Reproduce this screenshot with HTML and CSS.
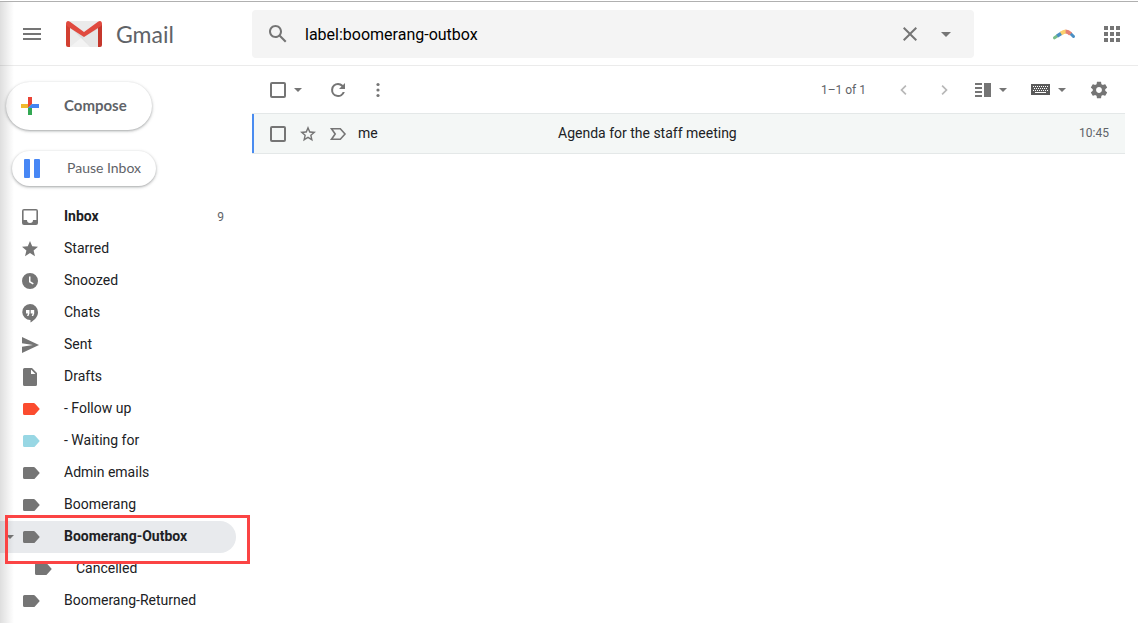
FILE: index.html
```html
<!DOCTYPE html>
<html lang="en">
<head>
    <meta charset="UTF-8">
    <meta name="viewport" content="width=device-width, initial-scale=1.0">
    <title>Gmail</title>
    <link rel="stylesheet" href="styles.css">
</head>
<body>
    <header class="header">
        <div class="brand">
            <button type="button" class="icon-btn" aria-label="Main menu">
                <svg width="24" height="24" viewBox="0 0 24 24"><path d="M3 18h18v-2H3v2zm0-5h18v-2H3v2zm0-7v2h18V6H3z"/></svg>
            </button>
            <a href="#" class="logo">
                <svg width="36" height="26" viewBox="0 0 36 26">
                    <path fill="#ebebeb" d="M2 0h32v26H2z"/>
                    <path fill="#dcdcdc" d="M4 6l14 10L32 6v20H24L15 17z"/>
                    <path fill="#e6e6e6" d="M18 16L32 8v18h-8l-7-8z"/>
                    <path fill="#f3f3f3" d="M4 26l11-9 9 9z"/>
                    <path fill="#d23f31" d="M0 3l4 3v20H2a2 2 0 0 1-2-2z"/>
                    <path fill="#c5372c" d="M36 3l-4 3v20h2a2 2 0 0 0 2-2z"/>
                    <path fill="#e04a3f" d="M0 3C0 0 2-.6 4 .8L18 11 32 .8c2-1.4 4-.8 4 2.200 0 1-.5 1.600-1.200 2.200L18 16 1.200 5.200C.5 4.600 0 4 0 3z"/>
                </svg>
                <span class="logo-text">Gmail</span>
            </a>
        </div>
        <form class="search" role="search">
            <button type="button" class="icon-btn" aria-label="Search mail">
                <svg width="24" height="24" viewBox="0 0 24 24"><path d="M20.490 19l-5.730-5.730C15.530 12.200 16 10.910 16 9.500 16 5.910 13.090 3 9.500 3S3 5.910 3 9.500 5.910 16 9.500 16c1.410 0 2.700-.470 3.770-1.240L19 20.490 20.490 19zM5 9.500C5 7.010 7.010 5 9.500 5S14 7.010 14 9.500 11.990 14 9.500 14 5 11.990 5 9.500z"/></svg>
            </button>
            <input type="text" class="search-input" aria-label="Search mail" value="label:boomerang-outbox">
            <button type="button" class="icon-btn" aria-label="Clear search">
                <svg width="24" height="24" viewBox="0 0 24 24"><path d="M19 6.400L17.600 5 12 10.600 6.400 5 5 6.400l5.600 5.600L5 17.600 6.400 19l5.600-5.600 5.600 5.600 1.400-1.400-5.600-5.600z"/></svg>
            </button>
            <button type="button" class="icon-btn options" aria-label="Search options">
                <svg width="24" height="24" viewBox="0 0 24 24"><path d="M7 10l5 5 5-5z"/></svg>
            </button>
        </form>
        <div class="apps">
            <button type="button" class="icon-btn" aria-label="Boomerang">
                <svg class="line" width="24" height="24" viewBox="0 0 24 24" stroke-width="3">
                    <path stroke="#79bd8b" stroke-linecap="round" d="M2.500 15.800l3-2"/>
                    <path stroke="#4a8fc4" stroke-linecap="round" d="M18.500 11.500l3 3"/>
                    <path stroke="#4a8fc4" stroke-width="3.600" d="M5.200 14L9.500 11.200"/>
                    <path stroke="#fbd06d" stroke-width="4" d="M9 11.500q2.500-1.600 5-2"/>
                    <path stroke="#e58073" stroke-width="4" d="M13.600 9.600q2.600 0 5 2.400"/>
                </svg>
            </button>
            <button type="button" class="icon-btn" aria-label="Google apps">
                <svg width="24" height="24" viewBox="0 0 24 24"><path d="M4 4h4v4H4zm6 0h4v4h-4zm6 0h4v4h-4zM4 10h4v4H4zm6 0h4v4h-4zm6 0h4v4h-4zM4 16h4v4H4zm6 0h4v4h-4zm6 0h4v4h-4z"/></svg>
            </button>
        </div>
    </header>

    <div class="layout">
        <aside class="sidebar">
            <button type="button" class="compose">
                <svg width="18" height="18" viewBox="0 0 18 18">
                    <path fill="#ea4335" d="M7 0h4v7L7 11z"/>
                    <path fill="#f0b92d" d="M0 7h7v4H0z"/>
                    <path fill="#34a853" d="M7 11l4-4v11H7z"/>
                    <path fill="#4285f4" d="M18 7v4H7l4-4z"/>
                </svg>
                <span>Compose</span>
            </button>
            <button type="button" class="pause">
                <svg class="pause-icon" width="16" height="19" viewBox="0 0 16 19"><rect width="6" height="19" rx="1"/><rect x="10" width="6" height="19" rx="1"/></svg>
                <span>Pause Inbox</span>
            </button>

            <nav class="folders">
                <a href="#" class="folder unread">
                    <svg width="20" height="20" viewBox="0 0 20 20"><path fill-rule="evenodd" d="M4 2h12a2 2 0 0 1 2 2v12a2 2 0 0 1-2 2H4a2 2 0 0 1-2-2V4a2 2 0 0 1 2-2zm-.4 1.600v9.400h3.400a3 3 0 0 0 6 0h3.400V3.600z"/></svg>
                    <span class="name">Inbox</span>
                    <span class="count">9</span>
                </a>
                <a href="#" class="folder">
                    <svg width="20" height="20" viewBox="0 0 20 20"><path d="M10 14.100L15 17.300 13.600 11.500 18 7.700l-5.800-.5L10 1.900 7.800 7.200 2 7.700l4.400 3.800L5 17.300z"/></svg>
                    <span class="name">Starred</span>
                </a>
                <a href="#" class="folder">
                    <svg width="20" height="20" viewBox="0 0 20 20"><path fill-rule="evenodd" d="M10 2a8 8 0 1 0 0 16 8 8 0 0 0 0-16zM9 5.500h1.500v4.700l3.200 2-.8 1.400L9 11.200z"/></svg>
                    <span class="name">Snoozed</span>
                </a>
                <a href="#" class="folder">
                    <svg width="20" height="20" viewBox="0 0 20 20"><path fill-rule="evenodd" d="M10 1a8 8 0 0 1 8 8.200c0 4-3 7.600-7.500 10.300V17A8 8 0 0 1 10 1zM6 7v3.500h2L7 13h1.500L9.500 10.500V7zm4.700 0v3.500h2l-1 2.500h1.500l1-2.500V7z"/></svg>
                    <span class="name">Chats</span>
                </a>
                <a href="#" class="folder">
                    <svg width="20" height="20" viewBox="0 0 20 20"><path d="M2 18l17-8L2 2v6.200l11 1.800-11 1.800z"/></svg>
                    <span class="name">Sent</span>
                </a>
                <a href="#" class="folder">
                    <svg width="20" height="20" viewBox="0 0 20 20"><path fill-rule="evenodd" d="M4.500 1H12l5 5v11.500a1.500 1.500 0 0 1-1.500 1.500h-11A1.500 1.500 0 0 1 3 17.500v-15A1.500 1.500 0 0 1 4.500 1zM11 2.500V7h4.500z"/></svg>
                    <span class="name">Drafts</span>
                </a>
                <a href="#" class="folder follow-up">
                    <svg width="20" height="20" viewBox="0 0 20 20"><path d="M4.500 4h9.200c.5 0 .9.200 1.200.6L19.800 10l-4.900 5.400c-.3.400-.7.600-1.200.6H4.500A1.500 1.500 0 0 1 3 14.500v-9A1.500 1.500 0 0 1 4.500 4z"/></svg>
                    <span class="name">- Follow up</span>
                </a>
                <a href="#" class="folder waiting">
                    <svg width="20" height="20" viewBox="0 0 20 20"><path d="M4.500 4h9.200c.5 0 .9.200 1.200.6L19.800 10l-4.900 5.400c-.3.400-.7.600-1.200.6H4.500A1.500 1.500 0 0 1 3 14.500v-9A1.500 1.500 0 0 1 4.500 4z"/></svg>
                    <span class="name">- Waiting for</span>
                </a>
                <a href="#" class="folder">
                    <svg width="20" height="20" viewBox="0 0 20 20"><path d="M4.500 4h9.200c.5 0 .9.200 1.200.6L19.800 10l-4.900 5.400c-.3.400-.7.600-1.200.6H4.500A1.500 1.500 0 0 1 3 14.500v-9A1.500 1.500 0 0 1 4.500 4z"/></svg>
                    <span class="name">Admin emails</span>
                </a>
                <a href="#" class="folder">
                    <svg width="20" height="20" viewBox="0 0 20 20"><path d="M4.500 4h9.200c.5 0 .9.200 1.200.6L19.800 10l-4.900 5.400c-.3.400-.7.600-1.200.6H4.500A1.500 1.500 0 0 1 3 14.500v-9A1.500 1.500 0 0 1 4.500 4z"/></svg>
                    <span class="name">Boomerang</span>
                </a>
                <a href="#" class="folder active">
                    <svg class="expand" width="8" height="4" viewBox="0 0 8 4"><path d="M0 0h8L4 4z"/></svg>
                    <svg width="20" height="20" viewBox="0 0 20 20"><path d="M4.500 4h9.200c.5 0 .9.200 1.200.6L19.800 10l-4.900 5.400c-.3.400-.7.600-1.200.6H4.500A1.500 1.500 0 0 1 3 14.500v-9A1.500 1.500 0 0 1 4.500 4z"/></svg>
                    <span class="name">Boomerang-Outbox</span>
                    <span class="highlight"></span>
                </a>
                <a href="#" class="folder nested">
                    <svg width="20" height="20" viewBox="0 0 20 20"><path d="M4.500 4h9.200c.5 0 .9.200 1.200.6L19.800 10l-4.900 5.400c-.3.400-.7.600-1.200.6H4.500A1.500 1.500 0 0 1 3 14.500v-9A1.500 1.500 0 0 1 4.500 4z"/></svg>
                    <span class="name">Cancelled</span>
                </a>
                <a href="#" class="folder">
                    <svg width="20" height="20" viewBox="0 0 20 20"><path d="M4.500 4h9.200c.5 0 .9.200 1.200.6L19.800 10l-4.900 5.400c-.3.400-.7.600-1.200.6H4.500A1.500 1.500 0 0 1 3 14.500v-9A1.500 1.500 0 0 1 4.500 4z"/></svg>
                    <span class="name">Boomerang-Returned</span>
                </a>
            </nav>
        </aside>

        <main class="content">
            <div class="toolbar">
                <div class="tools">
                    <div class="select-all">
                        <input type="checkbox" class="check" aria-label="Select all">
                        <button type="button" class="icon-btn narrow" aria-label="Select options">
                            <svg width="8" height="4" viewBox="0 0 8 4"><path d="M0 0h8L4 4z"/></svg>
                        </button>
                    </div>
                    <button type="button" class="icon-btn" aria-label="Refresh">
                        <svg width="20" height="20" viewBox="0 0 20 20"><path d="M17 3v6h-6l2.500-2.500A5.200 5.200 0 0 0 10 5a5 5 0 1 0 4.700 7h2.100A7 7 0 1 1 10 3c1.900 0 3.700.800 5 2z"/></svg>
                    </button>
                    <button type="button" class="icon-btn" aria-label="More">
                        <svg width="20" height="20" viewBox="0 0 20 20"><circle cx="10" cy="4.500" r="1.600"/><circle cx="10" cy="10" r="1.600"/><circle cx="10" cy="15.500" r="1.600"/></svg>
                    </button>
                </div>
                <div class="tools">
                    <span class="range">1–1 of 1</span>
                    <button type="button" class="icon-btn pager" aria-label="Newer">
                        <svg width="20" height="20" viewBox="0 0 20 20"><path d="M12.500 6.200L8.700 10l3.800 3.800-1.200 1.200-5-5 5-5z"/></svg>
                    </button>
                    <button type="button" class="icon-btn pager" aria-label="Older">
                        <svg width="20" height="20" viewBox="0 0 20 20"><path d="M7.500 6.200l3.800 3.800-3.800 3.800L8.700 15l5-5-5-5z"/></svg>
                    </button>
                    <button type="button" class="menu-btn" aria-label="Split pane">
                        <svg width="16" height="14" viewBox="0 0 16 14"><path d="M0 0h7v2H0zm0 4h7v2H0zm0 4h7v2H0zm0 4h7v2H0zM9 0h7v14H9z"/></svg>
                        <svg width="8" height="4" viewBox="0 0 8 4"><path d="M0 0h8L4 4z"/></svg>
                    </button>
                    <button type="button" class="menu-btn" aria-label="Input tools">
                        <svg width="19" height="11" viewBox="0 0 19 11">
                            <path fill="#5a5a5a" d="M0 0h19v11H0z"/>
                            <path stroke="#fff" stroke-dasharray="1 1" d="M2 2.500h15M3 4.500h14M2 6.500h15"/>
                            <path stroke="#fff" d="M4 8.500h11"/>
                        </svg>
                        <svg width="8" height="4" viewBox="0 0 8 4"><path d="M0 0h8L4 4z"/></svg>
                    </button>
                    <button type="button" class="icon-btn" aria-label="Settings">
                        <svg width="20" height="20" viewBox="0 0 24 24"><path d="M19.430 12.980c.040-.320.070-.640.070-.980s-.030-.660-.070-.980l2.110-1.650c.190-.150.240-.420.120-.640l-2-3.460c-.120-.220-.390-.300-.610-.220l-2.490 1c-.520-.400-1.080-.730-1.690-.980l-.380-2.650C14.460 2.180 14.250 2 14 2h-4c-.250 0-.460.180-.490.420l-.380 2.650c-.610.250-1.170.590-1.690.980l-2.490-1c-.230-.090-.490 0-.610.220l-2 3.460c-.130.220-.070.490.120.640l2.110 1.650c-.040.320-.070.650-.070.980s.030.660.070.980l-2.110 1.650c-.190.150-.240.420-.120.640l2 3.460c.120.220.390.300.610.220l2.490-1c.520.400 1.080.730 1.690.980l.380 2.650c.030.240.240.420.490.420h4c.250 0 .460-.180.490-.420l.380-2.650c.610-.250 1.170-.590 1.690-.980l2.490 1c.230.090.490 0 .610-.220l2-3.460c.120-.220.070-.490-.120-.640l-2.110-1.650zM12 15.500c-1.930 0-3.500-1.570-3.500-3.500s1.570-3.500 3.500-3.500 3.500 1.570 3.500 3.500-1.570 3.500-3.500 3.500z"/></svg>
                    </button>
                </div>
            </div>

            <table class="mail-list">
                <tbody>
                    <tr>
                        <td class="actions">
                            <div class="action-row">
                                <input type="checkbox" class="check" aria-label="Select message">
                                <button type="button" class="icon-btn" aria-label="Star">
                                    <svg width="20" height="20" viewBox="0 0 20 20"><path fill-rule="evenodd" d="M18 7.800l-5.800-.5L10 2 7.800 7.300 2 7.800l4.400 3.800L5.100 17.200 10 14.200l4.900 3-1.300-5.600zM10 12.600l-2.800 1.700.7-3.200-2.400-2.100 3.200-.3L10 5.700l1.300 3 3.200.3-2.400 2.100.7 3.200z"/></svg>
                                </button>
                                <button type="button" class="icon-btn" aria-label="Important">
                                    <svg class="line" width="20" height="20" viewBox="0 0 20 20" stroke="#757575" stroke-width="1.600"><path d="M3.500 4.800h8.800L17 10l-4.700 5.200H3.500L7.200 10z"/></svg>
                                </button>
                            </div>
                        </td>
                        <td class="sender">me</td>
                        <td class="subject">Agenda for the staff meeting</td>
                        <td class="time">10:45</td>
                    </tr>
                </tbody>
            </table>
        </main>
    </div>
</body>
</html>
```
FILE: styles.css
```css
* {
    box-sizing: border-box;
}
body {
    position: relative;
    min-height: 100vh;
    margin: 0;
    padding-top: 1px;
    background-color: #fff;
    color: #202124;
    font-family: Roboto, Arial, sans-serif;
    font-size: 14px;
    overflow: hidden;
}
/* shadow along the left edge of the window */
body::before {
    content: "";
    position: absolute;
    top: 2px;
    bottom: 0;
    left: 0;
    width: 14px;
    background: linear-gradient(to right, rgba(0, 0, 0, 0.13), rgba(0, 0, 0, 0));
    pointer-events: none;
    z-index: 1;
}
svg {
    display: block;
    flex: none;
    fill: #757575;
}
svg.line {
    fill: none;
}
button {
    border: none;
    background: none;
    padding: 0;
    font: inherit;
    cursor: pointer;
}
a {
    color: inherit;
    text-decoration: none;
}
.icon-btn {
    display: flex;
    align-items: center;
    justify-content: center;
    flex: none;
    width: 40px;
    height: 40px;
}
.icon-btn.narrow {
    width: 24px;
}
.check {
    appearance: none;
    flex: none;
    width: 16px;
    height: 16px;
    margin: 0;
    border: 2px solid #757575;
    border-radius: 2px;
}

.header {
    display: flex;
    align-items: center;
    height: 65px;
    border-top: 1px solid #b0b0b0;
    border-bottom: 1px solid #ebebeb;
}
.brand {
    display: flex;
    align-items: center;
    flex: none;
    width: 252px;
    padding-left: 12px;
    gap: 14px;
}
.logo {
    display: flex;
    align-items: center;
    gap: 14px;
}
.logo-text {
    font-family: Lato, sans-serif;
    font-size: 23px;
    color: #5f6368;
}
.search {
    display: flex;
    align-items: center;
    flex: 1;
    max-width: 722px;
    height: 48px;
    padding: 0 12px 0 6px;
    background-color: #f4f4f4;
    border-radius: 4px;
}
.icon-btn.options {
    width: 32px;
}
.search-input {
    flex: 1;
    min-width: 0;
    padding: 2px 7px 0;
    border: none;
    outline: none;
    background: none;
    font: inherit;
    font-size: 16px;
    color: #000;
}
.apps {
    display: flex;
    gap: 8px;
    margin-left: auto;
    padding-right: 6px;
}

.layout {
    display: flex;
}
.sidebar {
    flex: none;
    width: 252px;
    padding-top: 16px;
}
.compose,
.pause {
    display: flex;
    align-items: center;
    background-color: #fff;
    color: #5f6368;
    font-family: Lato, sans-serif;
    box-shadow: 0 1px 2px rgba(60, 64, 67, 0.3), 0 1px 3px 1px rgba(60, 64, 67, 0.15);
}
.compose span,
.pause span {
    padding-bottom: 2px;
}
.compose {
    height: 48px;
    margin-left: 6px;
    padding: 0 25px 0 15px;
    gap: 25px;
    border-radius: 24px;
    font-size: 15px;
    font-weight: bold;
}
.pause {
    height: 35px;
    margin: 21px 0 15px 12px;
    padding: 0 15px 0 12px;
    gap: 27px;
    border-radius: 18px;
    font-size: 14px;
}
.pause-icon {
    fill: #4787f5;
}
.folder {
    position: relative;
    display: flex;
    align-items: center;
    height: 32px;
    margin-right: 16px;
    padding: 0 12px 0 20px;
    gap: 24px;
    border-radius: 0 16px 16px 0;
}
.folder .name {
    flex: 1;
    padding-bottom: 2px;
}
.folder .count {
    color: #5f6368;
    font-size: 12px;
}
.folder.unread,
.folder.active {
    font-weight: bold;
}
.folder.unread .count {
    font-weight: normal;
}
.folder.active {
    background-color: #e8eaed;
}
.folder.nested {
    padding-left: 32px;
}
.folder.follow-up svg {
    fill: #fb4c2f;
}
.folder.waiting svg {
    fill: #98d7e4;
}
.expand {
    position: absolute;
    left: 6px;
    top: 14px;
}
.highlight {
    position: absolute;
    top: -6px;
    right: -14px;
    bottom: -11px;
    left: 5px;
    border: 3px solid #fb4444;
    z-index: 2;
}

.content {
    flex: 1;
    min-width: 0;
    padding-right: 13px;
}
.toolbar {
    display: flex;
    align-items: center;
    justify-content: space-between;
    height: 47px;
    padding-left: 18px;
    padding-right: 6px;
}
.tools {
    display: flex;
    align-items: center;
}
.select-all {
    display: flex;
    align-items: center;
    margin-right: 8px;
}
.range {
    margin-right: 18px;
    color: #5f6368;
    font-size: 12px;
}
.pager svg {
    fill: #b8b8b8;
}
.menu-btn {
    display: flex;
    align-items: center;
    height: 40px;
    gap: 8px;
    margin-left: 11px;
    margin-right: 13px;
}

.mail-list {
    width: 100%;
    table-layout: fixed;
    border-collapse: collapse;
}
.mail-list tr {
    height: 40px;
    background-color: #f4f7f6;
}
.mail-list td {
    padding: 0 0 2px;
    border-top: 1px solid #e4e8e8;
    border-bottom: 1px solid #e4e8e8;
}
.mail-list .actions {
    width: 106px;
    padding: 0;
    box-shadow: inset 2px 0 #4a8cf0;
}
.action-row {
    display: flex;
    align-items: center;
    padding-left: 18px;
}
.action-row .icon-btn {
    width: 30px;
    height: 39px;
}
.action-row .check {
    margin-right: 7px;
}
.mail-list .sender {
    width: 200px;
}
.mail-list .time {
    width: 72px;
    padding-right: 16px;
    color: #5f6368;
    font-size: 12px;
    text-align: right;
}
```
